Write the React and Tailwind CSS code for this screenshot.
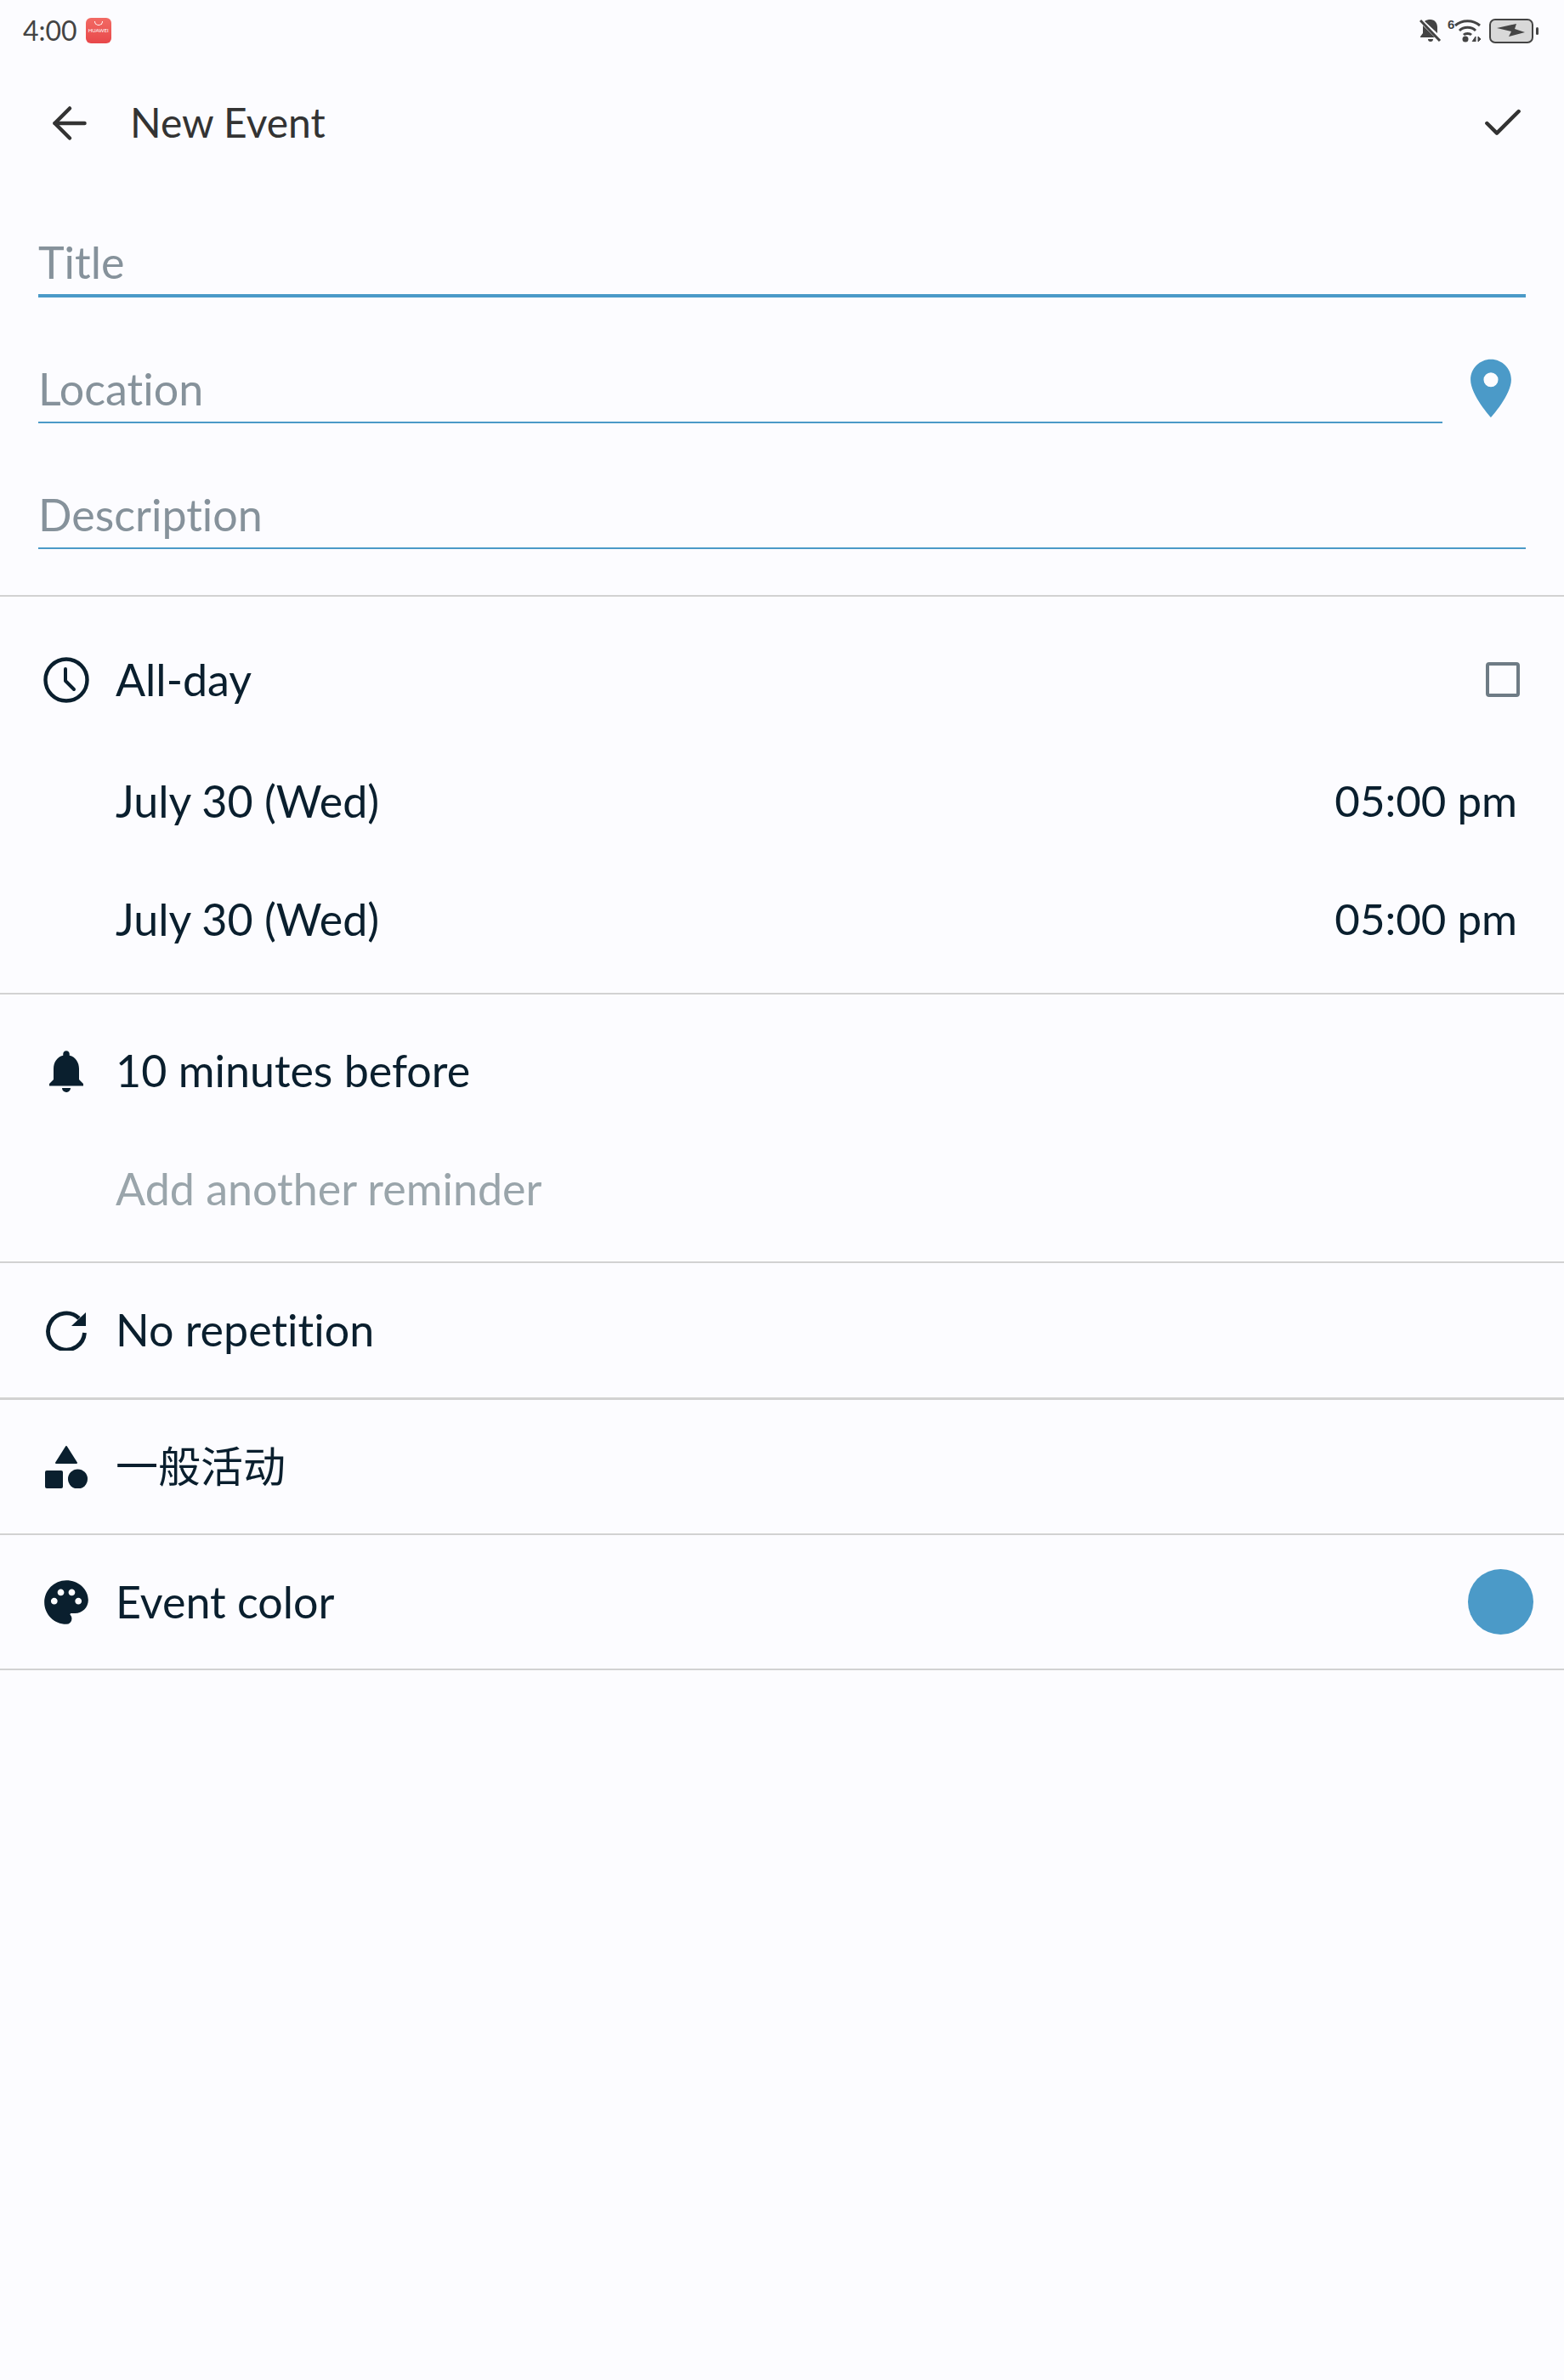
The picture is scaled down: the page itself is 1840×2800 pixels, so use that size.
import { ArrowLeft, Check } from "lucide-react";
import { MdNotifications, MdPalette, MdPlace } from "react-icons/md";

const font = { fontFamily: 'Lato, "Noto Sans CJK SC", sans-serif' };

function ClockIcon() {
  return (
    <svg viewBox="0 0 54 54" className="h-[54px] w-[54px]" fill="none" stroke="currentColor">
      <circle cx="27" cy="27" r="24.500" strokeWidth="4.400" />
      <path d="M26 14v14l10 10" strokeWidth="4" strokeLinecap="round" strokeLinejoin="round" />
    </svg>
  );
}

function RepeatIcon() {
  return (
    <svg viewBox="0 0 48 48" className="h-[48px] w-[48px]" fill="none" stroke="currentColor">
      <path d="M39 10A21.500 21.500 0 1 0 45.500 27" strokeWidth="4.800" />
      <path d="M47 3V19H30Z" fill="currentColor" stroke="none" />
    </svg>
  );
}

function ShapesIcon() {
  return (
    <svg viewBox="0 0 50 50" className="h-[50px] w-[50px]" fill="currentColor">
      <path d="M25 1 37 20H13Z" stroke="currentColor" strokeWidth="2" strokeLinejoin="round" />
      <rect x="0" y="29" width="21" height="21" rx="2" />
      <circle cx="38.500" cy="39" r="11.500" />
    </svg>
  );
}

function StatusIcons() {
  return (
    <div className="flex items-center text-[#444]">
      <svg viewBox="0 0 26 28" className="h-[28px] w-[26px]" fill="currentColor">
        <path d="M13 1c5 0 8 4 8 9v7L6 3c2-1.500 4-2 7-2ZM4 8v9l-3 4v1h17Z" />
        <path d="M1 2 24 26" stroke="currentColor" strokeWidth="3" />
        <path d="M10 24h6a3 3 0 0 1-6 0Z" />
      </svg>
      <svg viewBox="0 0 40 30" className="ml-[7px] h-[30px] w-[40px]" fill="none" stroke="currentColor">
        <text x="0" y="13" fontSize="15" fontWeight="700" fill="currentColor" stroke="none" fontFamily="Liberation Sans">6</text>
        <path d="M9 9c8-7 21-7 29 0" strokeWidth="3" />
        <path d="M14 15c5-5 14-5 19 0" strokeWidth="3" />
        <path d="M19 20c2-2 7-2 9 0" strokeWidth="3" />
        <circle cx="21" cy="25" r="3.500" fill="currentColor" stroke="none" />
        <path d="M29 28l4-6v6M36 22v6l3-3Z" fill="currentColor" strokeWidth="1" />
      </svg>
      <div className="ml-[9px] flex items-center">
        <div className="flex h-[29px] w-[52px] items-center justify-center rounded-[7px] border-2 border-[#444] bg-[#d8d8d8]">
          <svg viewBox="0 0 34 16" className="h-[16px] w-[34px]" fill="currentColor">
            <path d="M0 5 23 0 21 6 33 10 14 15 17 9Z" />
          </svg>
        </div>
        <div className="ml-[3px] h-[9px] w-[3px] rounded-sm bg-[#444]" />
      </div>
    </div>
  );
}

function Field({ label, className }) {
  return (
    <div className={`flex h-[72px] items-center border-[#4b9ac8] pb-[8px] text-[52px] leading-none text-[#86929b] ${className || "border-b-2"}`}>
      {label}
    </div>
  );
}

function Row({ icon, children, right, muted, className, textClass }) {
  return (
    <div className={`flex h-[139px] w-full items-center ${className || ""}`}>
      <div className="flex w-[136px] shrink-0 items-center justify-center pl-[20px] text-[#0a1f2e]">{icon}</div>
      <div className={`flex-1 pb-[2px] leading-none ${textClass || "text-[52px]"} ${muted ? "text-[#9aa5ab]" : "text-[#0a1f2e]"}`}>{children}</div>
      {right}
    </div>
  );
}

const time = <div className="pb-[2px] pr-[55px] text-[51px] leading-none text-[#0a1f2e]">05:00 pm</div>;

export default function App() {
  return (
    <div className="min-h-[2800px] bg-[#fcfcff] [font-variant-ligatures:none]" style={font}>
      <div className="flex h-[72px] items-center justify-between pl-[27px] pr-[30px]">
        <div className="flex items-center">
          <span className="text-[32px] leading-none text-[#444]">4:00</span>
          <div className="ml-[10px] flex h-[30px] w-[30px] flex-col items-center rounded-[6px] bg-gradient-to-b from-[#f26a64] to-[#e8474a] pt-[4px]">
            <div className="h-[5px] w-[10px] rounded-b-full border-x border-b border-white" />
            <span className="mt-[3px] text-[6px] leading-none text-white">HUAWEI</span>
          </div>
        </div>
        <StatusIcons />
      </div>

      <div className="flex h-[146px] items-center pl-[52px] pr-[44px]">
        <ArrowLeft size={60} strokeWidth={1.8} className="text-[#333]" />
        <div className="ml-[41px] flex-1 pb-[2px] text-[48px] leading-none text-[#333]">New Event</div>
        <Check size={56} strokeWidth={1.9} className="text-[#333]" />
      </div>

      <div className="flex flex-col gap-[76px] px-[45px] pb-[54px] pt-[60px]">
        <Field label="Title" className="border-b-4" />
        <div className="relative">
          <Field label="Location" className="mr-[98px] border-b-2" />
          <MdPlace size={82} className="absolute right-[0px] top-[-10px] text-[#4b9ac8]" />
        </div>
        <Field label="Description" />
      </div>

      <div className="border-t-2 border-[#d2d2d2] pt-[28px] pb-[17px]">
        <Row
          icon={<ClockIcon />}
          className="mb-[4px]"
          right={<div className="mr-[52px] h-[41px] w-[40px] rounded-[4px] border-[4px] border-[#6e7b85]" />}
        >
          All-day
        </Row>
        <Row right={time}>July 30 (Wed)</Row>
        <Row right={time}>July 30 (Wed)</Row>
      </div>

      <div className="border-t-2 border-[#d2d2d2] pt-[20px] pb-[16px]">
        <Row icon={<MdNotifications size={60} />}>10 minutes before</Row>
        <Row muted>Add another reminder</Row>
      </div>

      <div className="flex h-[160px] items-center border-t-2 border-[#d2d2d2]">
        <Row icon={<RepeatIcon />}>No repetition</Row>
      </div>
      <div className="flex h-[160px] items-center border-t-[3px] border-[#d2d2d2]">
        <Row icon={<ShapesIcon />} textClass="text-[50px]">一般活动</Row>
      </div>
      <div className="flex h-[159px] items-center border-t-2 border-[#d2d2d2]">
        <Row
          icon={<MdPalette size={62} />}
          right={<div className="mr-[36px] h-[77px] w-[77px] rounded-full bg-[#4b9ac8]" />}
        >
          Event color
        </Row>
      </div>
      <div className="border-t-2 border-[#d2d2d2]" />
    </div>
  );
}
